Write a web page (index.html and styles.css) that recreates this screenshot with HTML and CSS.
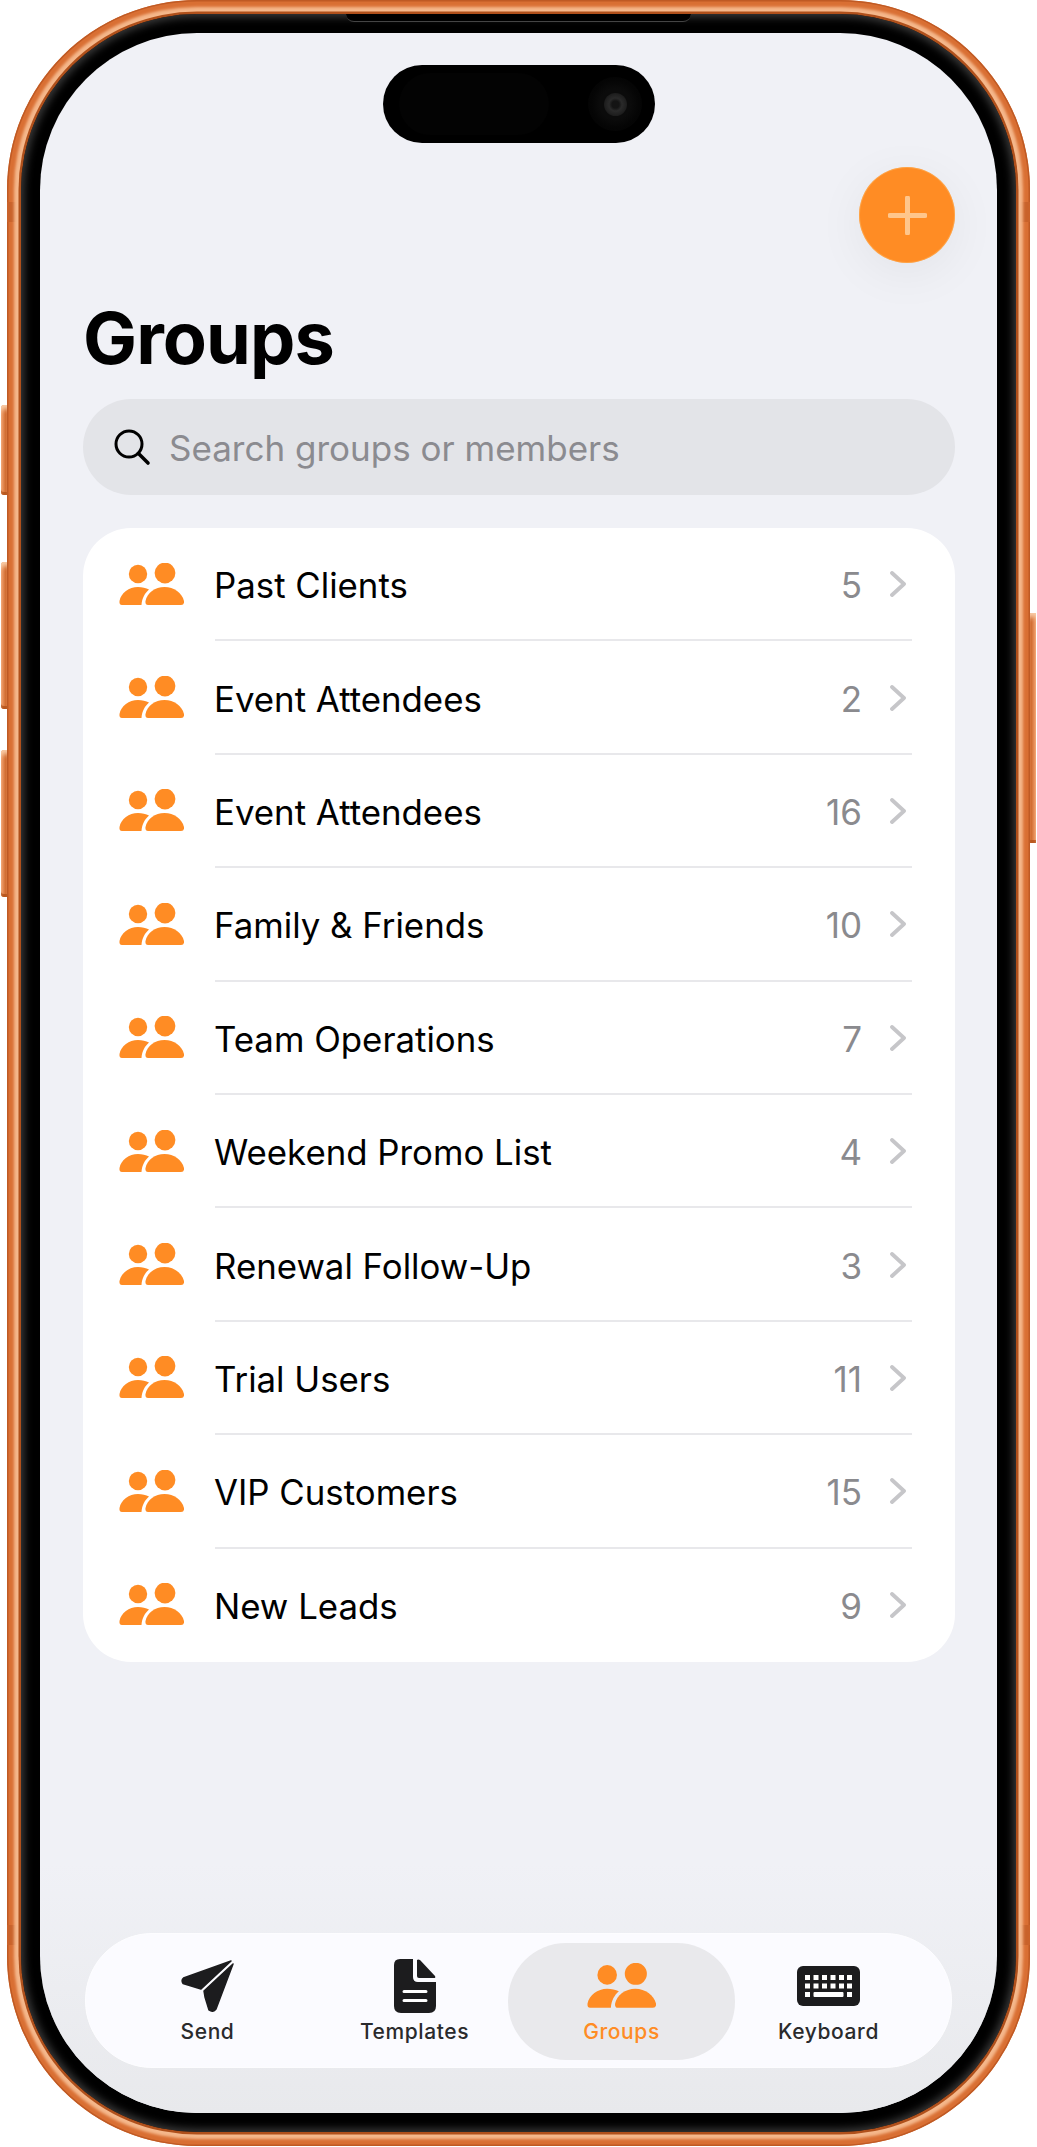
FILE: index.html
```html
<!DOCTYPE html>
<html lang="en">
<head>
<meta charset="utf-8">
<title>Groups</title>
<link rel="stylesheet" href="styles.css">
</head>
<body>
<svg class="defs" width="0" height="0" aria-hidden="true">
  <symbol id="people" viewBox="0 0 65 42">
    <circle cx="19" cy="11" r="9.2"/>
    <circle cx="46" cy="10" r="10.4"/>
    <path d="M3 42Q0 42 .5 38C2 30 10 24 19 24C23 24 27 25 30 26.5C26 30 23 35 22.5 42Z"/>
    <path d="M29 42Q26 42 26.5 38C28 30 36 24 45.5 24C55 24 63 30 65 38Q65.5 42 62 42Z"/>
  </symbol>
  <symbol id="chev" viewBox="0 0 16 26">
    <path d="M2 2L14 13L2 24" fill="none" stroke="currentColor" stroke-width="3.8" stroke-linecap="round" stroke-linejoin="round"/>
  </symbol>
</svg>
<div class="device">
  <span class="side side-a"></span>
  <span class="side side-b"></span>
  <span class="side side-c"></span>
  <span class="side side-d"></span>
  <div class="frame">
    <span class="band band-tl"></span>
    <span class="band band-tr"></span>
    <span class="band band-bl"></span>
    <span class="band band-br"></span>
    <div class="bezel">
      <span class="notch"></span>
      <div class="screen">
        <div class="island">
          <span class="island-sensor"></span>
          <span class="island-cam"><span class="island-lens"></span></span>
        </div>
        <main class="content">
          <div class="topbar">
            <button class="fab" aria-label="Add group">
              <svg width="39" height="39" viewBox="0 0 39 39"><path d="M19.5 2V37M2 19.5H37" stroke="#ffc68c" stroke-width="5" stroke-linecap="round"/></svg>
            </button>
          </div>
          <h1 class="title">Groups</h1>
          <div class="search">
            <svg class="search-icon" width="38" height="38" viewBox="0 0 38 38"><circle cx="16" cy="16" r="13" fill="none" stroke="#000" stroke-width="3"/><path d="M25.5 25.5L35 35" stroke="#000" stroke-width="3.6" stroke-linecap="round"/></svg>
            <span class="search-text">Search groups or members</span>
          </div>
          <ul class="list">
            <li class="row"><svg class="row-icon"><use href="#people"/></svg><div class="row-body"><span class="row-name">Past Clients</span><span class="row-count">5</span><svg class="chev"><use href="#chev"/></svg></div></li>
            <li class="row"><svg class="row-icon"><use href="#people"/></svg><div class="row-body"><span class="row-name">Event Attendees</span><span class="row-count">2</span><svg class="chev"><use href="#chev"/></svg></div></li>
            <li class="row"><svg class="row-icon"><use href="#people"/></svg><div class="row-body"><span class="row-name">Event Attendees</span><span class="row-count">16</span><svg class="chev"><use href="#chev"/></svg></div></li>
            <li class="row"><svg class="row-icon"><use href="#people"/></svg><div class="row-body"><span class="row-name">Family &amp; Friends</span><span class="row-count">10</span><svg class="chev"><use href="#chev"/></svg></div></li>
            <li class="row"><svg class="row-icon"><use href="#people"/></svg><div class="row-body"><span class="row-name">Team Operations</span><span class="row-count">7</span><svg class="chev"><use href="#chev"/></svg></div></li>
            <li class="row"><svg class="row-icon"><use href="#people"/></svg><div class="row-body"><span class="row-name">Weekend Promo List</span><span class="row-count">4</span><svg class="chev"><use href="#chev"/></svg></div></li>
            <li class="row"><svg class="row-icon"><use href="#people"/></svg><div class="row-body"><span class="row-name">Renewal Follow-Up</span><span class="row-count">3</span><svg class="chev"><use href="#chev"/></svg></div></li>
            <li class="row"><svg class="row-icon"><use href="#people"/></svg><div class="row-body"><span class="row-name">Trial Users</span><span class="row-count">11</span><svg class="chev"><use href="#chev"/></svg></div></li>
            <li class="row"><svg class="row-icon"><use href="#people"/></svg><div class="row-body"><span class="row-name">VIP Customers</span><span class="row-count">15</span><svg class="chev"><use href="#chev"/></svg></div></li>
            <li class="row"><svg class="row-icon"><use href="#people"/></svg><div class="row-body"><span class="row-name">New Leads</span><span class="row-count">9</span><svg class="chev"><use href="#chev"/></svg></div></li>
          </ul>
        </main>
        <div class="tabwrap">
          <nav class="tabbar">
            <div class="tab">
              <svg class="tab-icon" width="53" height="54" viewBox="0 0 53 54"><path d="M50 2L2.5 19Q0 21 2 24.5L20 30Z" fill="#1c1c1e" stroke="#1c1c1e" stroke-width="1.5" stroke-linejoin="round"/><path d="M52 5L23 32L24 38L28 51Q32 54 35 50Z" fill="#1c1c1e" stroke="#1c1c1e" stroke-width="1.5" stroke-linejoin="round"/></svg>
              <span class="tab-label">Send</span>
            </div>
            <div class="tab">
              <svg class="tab-icon" width="42" height="54" viewBox="0 0 42 54"><path d="M6 0H19V18Q19 23 24 23H42V47Q42 54 35 54H7Q0 54 0 47V6Q0 0 6 0Z" fill="#1c1c1e"/><path d="M23 1Q24 0 26 1L41 17Q42 19 40 19H25Q23 19 23 17Z" fill="#1c1c1e"/><path d="M10 32.500H32M10 41.500H32" stroke="#fff" stroke-width="3" stroke-linecap="round"/></svg>
              <span class="tab-label">Templates</span>
            </div>
            <div class="tab tab-active">
              <svg class="tab-icon tab-people"><use href="#people"/></svg>
              <span class="tab-label">Groups</span>
            </div>
            <div class="tab">
              <svg class="tab-icon" width="63" height="40" viewBox="0 0 63 40">
                <rect width="63" height="40" rx="6" fill="#1c1c1e"/>
                <g fill="#fff">
                  <rect x="8" y="9" width="5" height="5"/><rect x="16.500" y="9" width="5" height="5"/><rect x="25" y="9" width="5" height="5"/><rect x="33.500" y="9" width="5" height="5"/><rect x="42" y="9" width="5" height="5"/><rect x="50" y="9" width="5" height="5"/>
                  <rect x="8" y="17.500" width="5" height="5"/><rect x="16.500" y="17.500" width="5" height="5"/><rect x="25" y="17.500" width="5" height="5"/><rect x="33.500" y="17.500" width="5" height="5"/><rect x="42" y="17.500" width="5" height="5"/><rect x="50" y="17.500" width="5" height="5"/>
                  <rect x="8" y="26" width="5" height="5"/><rect x="16.500" y="26" width="30" height="5" rx="1"/><rect x="50" y="26" width="5" height="5"/>
                </g>
              </svg>
              <span class="tab-label">Keyboard</span>
            </div>
          </nav>
        </div>
      </div>
    </div>
  </div>
</div>
</body>
</html>
```

FILE: styles.css
```css
* { box-sizing: border-box; }
html, body { margin: 0; padding: 0; background: #fff; }
body { font-family: Inter, "Liberation Sans", sans-serif; width: 1037px; height: 2147px; overflow: hidden; }
.defs { position: absolute; }

.device { position: relative; width: 1023px; height: 2146px; margin-left: 7px; }
.side { position: absolute; width: 8px; background: linear-gradient(90deg, #f0a06c, #d06a30 60%, #e38a52); border-radius: 3px 0 0 3px; box-shadow: inset 0 6px 5px -2px #f9cda8, inset 0 -3px 0 #b9571f; }
.side-a { left: -6px; top: 405px; height: 90px; }
.side-b { left: -6px; top: 562px; height: 147px; }
.side-c { left: -6px; top: 750px; height: 147px; }
.side-d { right: -6px; top: 613px; height: 230px; border-radius: 0 3px 3px 0; transform: scaleX(-1); }

.frame { position: relative; width: 1023px; height: 2146px; padding: 14px; border-radius: 190px; background: #d96f33; box-shadow: inset 0 0 0 1.500px #bf5a24; }
.band { position: absolute; width: 15px; height: 20px; background: #c9622a; }
.band-tl { left: 0; top: 202px; }
.band-tr { right: 0; top: 202px; }
.band-bl { left: 0; top: 1925px; }
.band-br { right: 0; top: 1925px; }

.bezel { position: relative; width: 995px; height: 2118px; padding: 19px; border-radius: 176px; background: #000; box-shadow: 0 0 0 2.500px #b0501b, 0 0 3px 6.500px #f5b88c, inset 0 0 9px 3px #3c3c3c; }
.notch { position: absolute; left: 325px; top: 0; width: 345px; height: 8px; background: #000; border-bottom: 1.500px solid #444; border-radius: 0 0 8px 8px; }

.screen { position: relative; display: flex; flex-direction: column; width: 957px; height: 2080px; border-radius: 157px; background: #f0f1f6; overflow: hidden; }
.island { position: absolute; left: 343px; top: 32px; width: 272px; height: 78px; border-radius: 39px; background: #000; }
.island-sensor { position: absolute; left: 16px; top: 8px; width: 150px; height: 62px; border-radius: 31px; background: #030303; }
.island-cam { position: absolute; left: 205px; top: 12px; width: 54px; height: 54px; border-radius: 50%; background: radial-gradient(circle, #0b0b0b 0 40%, #050505 62%, #020202 100%); display: flex; align-items: center; justify-content: center; }
.island-lens { width: 23px; height: 23px; border-radius: 50%; background: radial-gradient(circle, #141414 0 22%, #2a2a2a 40%, #202020 62%, #0e0e0e 100%); }

.content { padding: 134px 42px 0 43px; flex: 1; }
.topbar { display: flex; justify-content: flex-end; }
.fab { width: 96px; height: 96px; border: 0; padding: 0; border-radius: 50%; background: #ff8c24; box-shadow: 0 10px 50px rgba(0, 0, 0, .06), 0 0 0 1px rgba(255, 185, 100, .5) inset; display: flex; align-items: center; justify-content: center; }
.title { margin: 35px 0 21px; height: 80px; font-size: 72px; line-height: 80px; font-weight: 700; color: #000; letter-spacing: -.9px; }
.search { display: flex; align-items: center; height: 96px; padding-left: 30px; border-radius: 48px; background: #e3e4e8; }
.search-icon { flex: none; margin-right: 18px; }
.search-text { font-size: 35px; line-height: 44px; padding-top: 1px; color: #8b8b90; }

.list { list-style: none; margin: 33px 0 0; padding: 0; background: #fff; border-radius: 48px; }
.row { display: flex; align-items: center; height: 113.400px; padding-left: 36px; }
.row-icon { flex: none; width: 65px; height: 42px; fill: #ff8c24; margin-right: 31px; margin-top: -2px; }
.row-body { flex: 1; height: 100%; display: flex; align-items: center; margin-right: 43px; padding-top: 3px; border-bottom: 2px solid #e8e8eb; }
.row:last-child .row-body { border-bottom-color: transparent; }
.row-name { flex: 1; font-size: 34.800px; color: #000; margin-left: -1px; }
.row-count { font-size: 35px; color: #8a8a8e; margin-right: 28px; }
.chev { width: 16px; height: 26px; margin-right: 6px; margin-top: -2px; color: #c6c6c9; }

.tabwrap { padding: 70px 45px 45px; background: linear-gradient(180deg, rgba(232, 233, 236, 0), #e8e9ec 100%); }
.tabbar { display: grid; grid-template-columns: repeat(4, 207px); height: 135px; padding: 9px 18px; border-radius: 67px; background: #fbfbff; border: 1.500px solid #fdfdff; }
.tab { display: flex; flex-direction: column; align-items: center; justify-content: flex-start; border-radius: 58px; height: 117px; }
.tab-active { margin: 0 -10px; background: #e9e9ec; }
.tab-icon { display: block; height: 54px; margin-top: 16px; }
.tab-people { width: 69px; height: 45px; margin-top: 20px; margin-bottom: 5px; fill: #ff8c24; }
.tab-label { margin-top: 5px; font-size: 21px; line-height: 28px; font-weight: 500; color: #2a2a2c; letter-spacing: .6px; }
.tab-active .tab-label { color: #ff8c24; }
```
